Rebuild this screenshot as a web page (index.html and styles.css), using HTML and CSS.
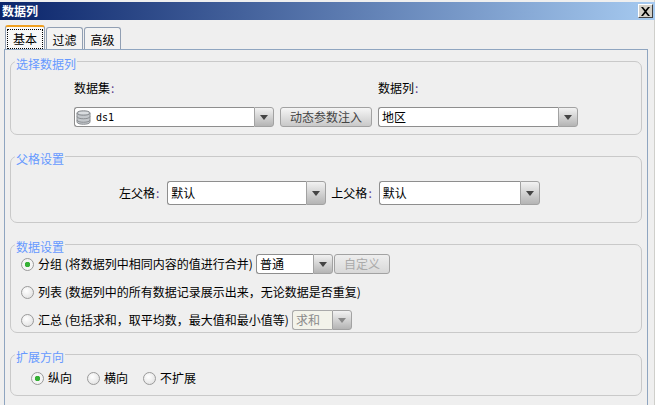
FILE: index.html
```html
<!DOCTYPE html>
<html lang="zh">
<head>
<meta charset="utf-8">
<title>数据列</title>
<link rel="stylesheet" href="styles.css">
</head>
<body>
<div class="window">
  <div class="titlebar">
    <span class="title">数据列</span>
    <span class="close"><svg width="11" height="9" viewBox="0 0 11 9"><path d="M1 0h2l2.500 3L8 0h2L6.500 4.500 10 9H8L5.500 6 3 9H1l3.500-4.500z" fill="#000"/></svg></span>
  </div>
  <div class="tabs">
    <div class="tab active"><span class="focus">基本</span></div>
    <div class="tab">过滤</div>
    <div class="tab">高级</div>
  </div>
  <div class="panel">
    <fieldset class="group g-select">
      <legend>选择数据列</legend>
      <div class="labels">
        <span class="col-a">数据集<i>:</i></span>
        <span>数据列<i>:</i></span>
      </div>
      <div class="row">
        <div class="combo w200">
          <span class="field icon-field">
            <svg class="db" width="15" height="15" viewBox="0 0 15 15"><path d="M1 3c0-3 13-3 13 0v9c0 3-13 3-13 0z" fill="#c4c8cc" stroke="#8b8f93"/><path d="M1 3c0 3 13 3 13 0M1 6.500c0 3 13 3 13 0M1 10c0 3 13 3 13 0" fill="none" stroke="#8b8f93"/><path d="M3 3h9" stroke="#eef1f3"/></svg>
            <span class="mono">ds1</span>
          </span>
          <span class="arrow"><b></b></span>
        </div>
        <span class="btn inject">动态参数注入</span>
        <div class="combo w200">
          <span class="field">地区</span>
          <span class="arrow"><b></b></span>
        </div>
      </div>
    </fieldset>
    <fieldset class="group g-parent">
      <legend>父格设置</legend>
      <div class="row parent-row">
        <span class="lbl">左父格<i>:</i></span>
        <div class="combo w159 tall"><span class="field">默认</span><span class="arrow"><b></b></span></div>
        <span class="lbl">上父格<i>:</i></span>
        <div class="combo w161 tall"><span class="field">默认</span><span class="arrow"><b></b></span></div>
      </div>
    </fieldset>
    <fieldset class="group g-data">
      <legend>数据设置</legend>
      <div class="opt">
        <label class="radio r-group"><input type="radio" name="mode" checked>分组 (将数据列中相同内容的值进行合并)</label>
        <div class="combo w77"><span class="field">普通</span><span class="arrow"><b></b></span></div>
        <span class="btn custom disabled">自定义</span>
      </div>
      <div class="opt">
        <label class="radio"><input type="radio" name="mode">列表 (数据列中的所有数据记录展示出来，无论数据是否重复)</label>
      </div>
      <div class="opt">
        <label class="radio r-sum"><input type="radio" name="mode">汇总 (包括求和，取平均数，最大值和最小值等)</label>
        <div class="combo w60 off"><span class="field">求和</span><span class="arrow"><b></b></span></div>
      </div>
    </fieldset>
    <fieldset class="group g-dir">
      <legend>扩展方向</legend>
      <div class="dirs">
        <label class="radio"><input type="radio" name="dir" checked>纵向</label>
        <label class="radio"><input type="radio" name="dir">横向</label>
        <label class="radio"><input type="radio" name="dir">不扩展</label>
      </div>
    </fieldset>
  </div>
</div>
</body>
</html>
```
FILE: styles.css
```css
* { box-sizing: border-box; }
html, body { margin: 0; padding: 0; }
body {
  width: 655px;
  height: 405px;
  overflow: hidden;
  background: #efefef;
  font: 12px/14px "Noto Sans CJK SC", "Liberation Sans", sans-serif;
  color: #000;
}
i { font-style: normal; color: #5a3a8a; margin-left: 1px; }

.window { width: 655px; height: 405px; padding-top: 2px; display: flex; flex-direction: column; border-right: 1px solid #cfcfcb; }
.titlebar {
  height: 18px;
  flex: none;
  padding: 0 2px 0 2px;
  margin-right: -1px;
  display: flex;
  align-items: center;
  justify-content: space-between;
  background: linear-gradient(90deg, #0a246a, #a6caf0);
}
.title { color: #fff; font-weight: 700; font-size: 12px; line-height: 14px; }
.close {
  width: 15px;
  height: 14px;
  display: flex;
  align-items: center;
  justify-content: center;
  background: #d4d0c8;
  border: 1px solid;
  border-color: #fff #404040 #404040 #fff;
}

.tabs { height: 24px; flex: none; margin-top: 5px; padding-left: 5px; display: flex; align-items: flex-end; gap: 1px; }
.tab {
  width: 37px;
  height: 22px;
  border: 1px solid #919fb3;
  border-bottom: 0;
  border-radius: 3px 3px 0 0;
  background: #f3f3f3;
  text-align: center;
  line-height: 23px;
}
.tab.active {
  width: 40px;
  height: 24px;
  background: #f8f8f8;
  border-top: 2px solid #f0a020;
  padding: 2px 1px 0;
}
.focus { display: block; height: 20px; line-height: 17px; border: 1px dotted #000; }

.panel {
  flex: 1;
  width: 644px;
  margin-left: 4px;
  border: 1px solid #8fa5c0;
  border-bottom: 0;
  padding: 1px 5px 0;
}

.group {
  width: 632px;
  margin: 0 0 11px;
  padding: 0;
  border: 1px solid #c9c9c9;
  border-radius: 7px;
  min-inline-size: 0;
}
.group legend {
  margin-left: 4px;
  padding: 6px 1px 0;
  color: #6699ff;
  line-height: 14px;
  font-size: 12px;
}
.g-select { height: 84px; }
.g-parent { height: 77px; }
.g-data { height: 99px; }
.g-dir { height: 52px; }

.labels { display: flex; padding: 10px 0 0 63px; height: 23px; }
.col-a { width: 304px; }
.row { display: flex; align-items: center; padding-left: 63px; margin-top: 13px; }

.combo { display: flex; height: 20px; flex: none; }
.w200 { width: 200px; }
.w159 { width: 159px; }
.w161 { width: 161px; }
.w77 { width: 77px; }
.w60 { width: 60px; }
.tall { height: 24px; }

.field {
  flex: 1;
  min-width: 0;
  display: flex;
  align-items: center;
  padding-left: 3px;
  background: #fff;
  border: 1px solid #8e8e8e;
  border-right: 0;
  border-radius: 3px 0 0 3px;
  white-space: nowrap;
}
.icon-field { padding-left: 1px; }
.arrow {
  width: 20px;
  flex: none;
  display: flex;
  align-items: center;
  justify-content: center;
  background: linear-gradient(#f2f2f2, #b4b4b4);
  border: 1px solid #a2a2a2;
  border-radius: 0 3px 3px 0;
}
.arrow b { width: 0; height: 0; border: 4px solid transparent; border-top: 5px solid #444; border-bottom: 0; }
.db { margin: 0 5px 0 0; flex: none; }
.mono { font: 10px "DejaVu Sans Mono", monospace; }

.btn {
  display: flex;
  align-items: center;
  justify-content: center;
  flex: none;
  height: 20px;
  color: #444;
  background: linear-gradient(#f6f6f6, #c9c9c9);
  border: 1px solid #a2a2a2;
  border-radius: 3px;
}
.inject { width: 92px; margin: 0 6px; }
.custom { width: 56px; margin-left: 1px; }
.disabled { color: #aaa; background: linear-gradient(#eeeeee, #d8d8d8); }

.parent-row { padding-left: 0; margin-top: 15px; }
.lbl { margin: 0 8px 0 0; flex: none; }
.parent-row .lbl:first-child { margin-left: 108px; }
.parent-row .combo + .lbl { margin: 0 7px 0 5px; }

.opt { height: 28px; display: flex; align-items: center; padding-left: 10px; }
.g-data .opt:first-of-type { margin-top: -4px; }
.radio { display: flex; align-items: center; white-space: nowrap; }
.radio input {
  appearance: none;
  width: 13px;
  height: 13px;
  margin: 0 4px 0 0;
  flex: none;
  border: 1px solid #9a9a9a;
  border-radius: 50%;
  background: radial-gradient(circle at 40% 35%, #fff, #dcdcdc);
}
.radio input:checked { background: radial-gradient(circle, #35b035 0 2.500px, #f4f4f4 3px); }
.r-group { width: 235px; flex: none; }
.r-sum { width: 271px; flex: none; }
.off .field { background: #f3f3ea; color: #8a8a8a; border-color: #aaa; }
.off .arrow b { border-top-color: #888; }

.dirs { display: flex; padding: 7px 0 0 20px; gap: 15px; }
.dirs .radio { width: 41px; }
.dirs .radio:last-child { width: auto; }
```
